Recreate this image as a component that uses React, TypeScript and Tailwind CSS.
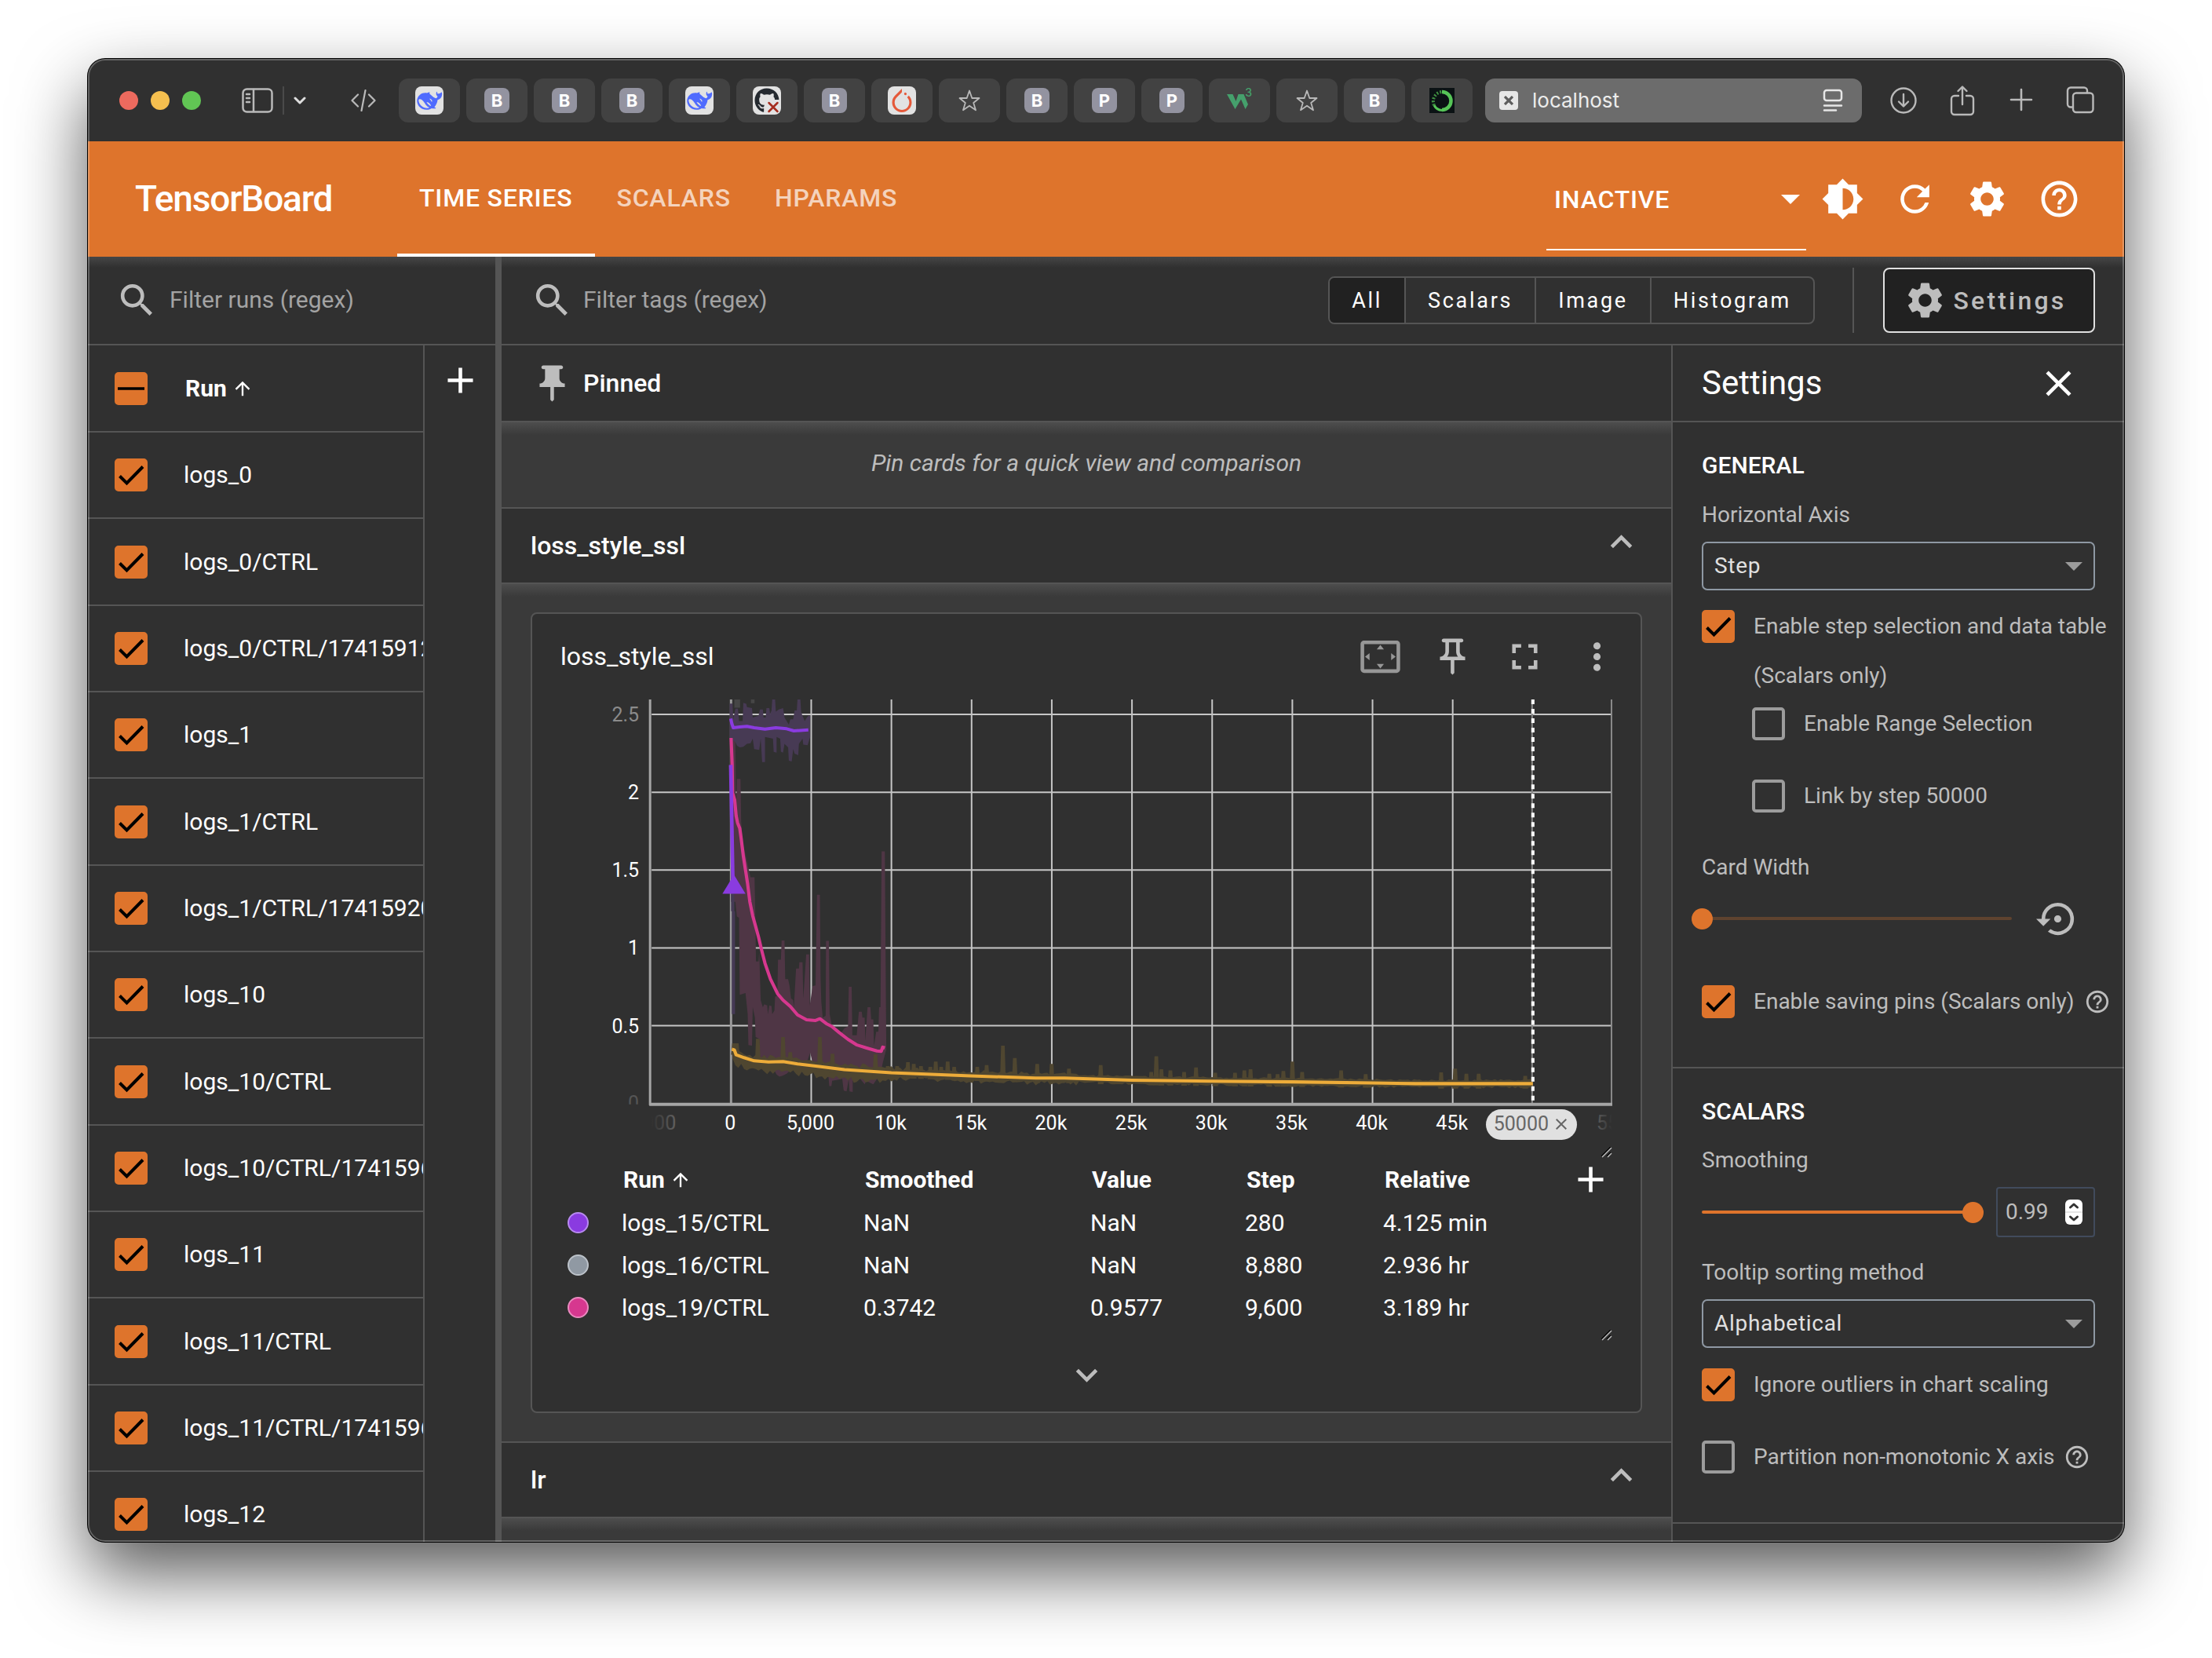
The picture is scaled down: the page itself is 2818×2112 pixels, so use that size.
import React from "react";
import {
  MdAdd,
  MdArrowUpward,
  MdBrightness6,
  MdClose,
  MdExpandLess,
  MdExpandMore,
  MdFullscreen,
  MdHelpOutline,
  MdMoreVert,
  MdOutlinePushPin,
  MdPushPin,
  MdRefresh,
  MdSearch,
  MdSettings,
  MdSettingsBackupRestore,
  MdSettingsOverscan,
} from "react-icons/md";
import { SiPytorch } from "react-icons/si";
import { FaGithub } from "react-icons/fa";

/* ---------- Browser chrome ---------- */

function Whale() {
  return (
    <svg viewBox="0 0 36 36" className="size-9">
      <path
        fill="#4f6bfe"
        d="M33.6 7.6c-.5-.3-1 .8-1.7 1.1-1 .5-2.2.2-3.1 1-.6-.9-1-2-1.1-2.9-.6 0-1.2 1.5-1 3.2.2 1.300.9 2.100 1.800 2.700-.5 1.400-1.300 2.600-2.300 2.500-2.200-.5-3.900-2.200-5.900-3.900-1.200-1-2.100-1.600-2.100-2.300 0-.5.4-1 .2-1.300-.8-.5-2.500.6-3.500.8-3.200-.5-6.300.1-8.900 2.200C3.200 13 2 16 2.300 19.300c.4 4.200 3 7.700 6.900 9.400 3.800 1.700 8.400 1.300 11.700-.8 1.500.6 4.500.6 5.300 0 .5-.5-1-.9-1.900-1.400 2.300-2.500 3.700-5.500 4.200-9.200 2.700-1 5.100-2.700 5.600-6.400.2-1.400 0-3-.5-3.300z"
      />
      <path fill="#e2e2e2" d="M4.300 17.500c.5-1.800 2.300-1.600 4-.5 3.300 2.100 4.200 6.300 7 8.500.8.7 2.300 1.100 2.500 1.500-.4.700-4 1-6.500 0-4.200-1.600-7-5.800-7-9.500zM14.500 20.400c.9-.4 2.300.2 3.500 1.200 1.200 1.100 2 2.600 2 3.200-.7.300-1.700-.2-2.600-1.200-1-1-1.700-1.900-2.900-3.200z" />
      <path fill="#e2e2e2" d="M18 15.800c1.500-.6 3.400 1 3.600 3 .1 1-.5 1-1.100.4-.4-1.100-1.100-2-2.500-3.400z" />
    </svg>
  );
}

function Octocat() {
  return (
    <div className="relative size-8">
      <FaGithub className="size-8 text-[#24292f]" />
      <svg viewBox="0 0 32 32" className="absolute inset-0 size-8">
        <path d="M13 15h20v18H13z" fill="#e2e2e2" />
        <path d="M18.500 19 29.500 30M29.500 19 18.500 30" stroke="#a52c1e" strokeWidth="2.500" strokeLinecap="round" />
      </svg>
    </div>
  );
}

function Star() {
  return (
    <svg viewBox="0 0 30 30" className="size-[30px]">
      <path
        d="M15 2.500 18.300 12h9.200l-7.300 6 2.800 9.300-8-5.600-8 5.600L9.800 18l-7.300-6h9.200z"
        fill="none"
        stroke="#b9b9b9"
        strokeWidth="1.800"
        strokeLinejoin="round"
      />
    </svg>
  );
}

function SchoolsMark() {
  return (
    <div className="relative size-8 text-[#45a06c]">
      <svg viewBox="0 0 32 32" className="size-8">
        <path d="M0 8h7.500l4 9 3-9h7l5.500 13-3.500 6L18 14.500 10.500 27z" fill="currentColor" />
      </svg>
      <span className="absolute -top-1 right-0 text-sm leading-5 font-medium">3</span>
    </div>
  );
}

function Ring() {
  return (
    <svg viewBox="0 0 32 32" className="size-8">
      <path d="M0 0h32v32H0z" fill="#0b1214" />
      <path d="M16 5a11.500 11.500 0 0 1 0 23" fill="none" stroke="#56c557" strokeWidth="4.500" />
      <path d="M16 28.500A12 12 0 0 1 6 22" fill="none" stroke="#56c557" strokeWidth="3" />
      <path d="M6 22A12 12 0 0 1 16 5" fill="none" stroke="#3f8f41" strokeWidth="4" strokeDasharray="2 2" />
    </svg>
  );
}

function LetterIcon({ letter }: { letter: string }) {
  return (
    <span className="flex size-8 items-center justify-center rounded-lg bg-[#9393a0] text-[22px] leading-8 font-bold text-white">
      {letter}
    </span>
  );
}

function LightTile({ children }: { children: React.ReactNode }) {
  return <span className="flex size-9 items-center justify-center rounded-lg bg-[#e2e2e2]">{children}</span>;
}

const TABS: { name: string; icon: React.ReactNode }[] = [
  { name: "DeepSeek", icon: <LightTile><Whale /></LightTile> },
  { name: "B", icon: <LetterIcon letter="B" /> },
  { name: "B", icon: <LetterIcon letter="B" /> },
  { name: "B", icon: <LetterIcon letter="B" /> },
  { name: "DeepSeek", icon: <LightTile><Whale /></LightTile> },
  { name: "GitHub", icon: <LightTile><Octocat /></LightTile> },
  { name: "B", icon: <LetterIcon letter="B" /> },
  { name: "PyTorch", icon: <LightTile><SiPytorch className="size-[30px] text-[#e5593a]" /></LightTile> },
  { name: "Favorites", icon: <Star /> },
  { name: "B", icon: <LetterIcon letter="B" /> },
  { name: "P", icon: <LetterIcon letter="P" /> },
  { name: "P", icon: <LetterIcon letter="P" /> },
  { name: "W3Schools", icon: <SchoolsMark /> },
  { name: "Favorites", icon: <Star /> },
  { name: "B", icon: <LetterIcon letter="B" /> },
  { name: "Ring", icon: <Ring /> },
];

function BrowserBar() {
  return (
    <div className="flex h-[105px] shrink-0 items-center bg-[#303030] pr-[38px] pl-10 font-['Inter',sans-serif]">
      <div className="flex gap-4">
        <button aria-label="Close window" className="size-6 rounded-full bg-[#ed6a5e]" />
        <button aria-label="Minimize window" className="size-6 rounded-full bg-[#f5bf4f]" />
        <button aria-label="Zoom window" className="size-6 rounded-full bg-[#61c554]" />
      </div>
      <button aria-label="Sidebar" className="ml-[52px]">
        <svg viewBox="0 0 40 32" className="h-8 w-10" fill="none" stroke="#b9b9b9" strokeWidth="2.500" strokeLinecap="round">
          <rect x="1.500" y="1.500" width="37" height="29" rx="5" />
          <path d="M15 2v28M6 8h4M6 13h4M6 18h4" />
        </svg>
      </button>
      <div className="ml-3 h-9 w-[2px] bg-[#4a4a4a]" />
      <button aria-label="Tab groups" className="ml-3">
        <svg viewBox="0 0 16 12" className="h-3 w-4" fill="none" stroke="#dedede" strokeWidth="3" strokeLinecap="round" strokeLinejoin="round">
          <path d="m2 3 6 6 6-6" />
        </svg>
      </button>
      <button aria-label="Developer tools" className="ml-[57px]">
        <svg viewBox="0 0 32 30" className="h-[30px] w-8" fill="none" stroke="#b9b9b9" strokeWidth="2.200" strokeLinecap="round" strokeLinejoin="round">
          <path d="M9 7.500 1.500 15 9 22.500M23 7.500l7.500 7.500-7.500 7.500M18.500 2l-5 26" />
        </svg>
      </button>
      <div className="ml-[29px] flex gap-2">
        {TABS.map((t, i) => (
          <button key={i} aria-label={t.name} className="flex h-14 w-[78px] items-center justify-center rounded-xl bg-[#424242]">
            {t.icon}
          </button>
        ))}
      </div>
      <div className="ml-4 flex h-14 min-w-0 flex-1 items-center rounded-xl bg-[#6c6c6c] pr-6 pl-[18px]">
        <span className="flex size-6 shrink-0 items-center justify-center rounded bg-[#e6e6e6]">
          <svg viewBox="0 0 12 12" className="size-3" stroke="#5c5c5c" strokeWidth="3.200">
            <path d="m1 1 10 10M11 1 1 11" />
          </svg>
        </span>
        <input
          aria-label="Address"
          defaultValue="localhost"
          className="ml-[18px] min-w-0 flex-1 bg-transparent text-[26px] leading-8 text-[#ececec] outline-none"
        />
        <svg viewBox="0 0 26 30" className="h-[30px] w-[26px]" fill="none" stroke="#e6e6e6" strokeWidth="2.500" strokeLinecap="round">
          <rect x="2" y="2" width="22" height="13" rx="3" />
          <path d="M2 21.500h22M2 27.500h15" />
        </svg>
      </div>
      <div className="ml-[35px] flex items-center gap-[39px] text-[#b9b9b9]">
        <button aria-label="Downloads">
          <svg viewBox="0 0 36 36" className="size-9" fill="none" stroke="currentColor" strokeWidth="2.400" strokeLinecap="round" strokeLinejoin="round">
            <circle cx="18" cy="18" r="15.500" />
            <path d="M18 10v15M12 19.500l6 6 6-6" />
          </svg>
        </button>
        <button aria-label="Share">
          <svg viewBox="0 0 36 40" className="h-10 w-9" fill="none" stroke="currentColor" strokeWidth="2.400" strokeLinecap="round" strokeLinejoin="round">
            <path d="M13 14H8a4 4 0 0 0-4 4v16a4 4 0 0 0 4 4h20a4 4 0 0 0 4-4V18a4 4 0 0 0-4-4h-5M18 25V3M12.500 8 18 2.500 23.500 8" />
          </svg>
        </button>
        <button aria-label="New tab">
          <svg viewBox="0 0 36 36" className="size-9" fill="none" stroke="currentColor" strokeWidth="2.600" strokeLinecap="round">
            <path d="M18 4v26M5 17h26" />
          </svg>
        </button>
        <button aria-label="Tab overview">
          <svg viewBox="0 0 36 36" className="size-9" fill="none" stroke="currentColor" strokeWidth="2.400" strokeLinecap="round" strokeLinejoin="round">
            <rect x="9" y="8.500" width="25.500" height="24.500" rx="4" />
            <path d="M8.500 26.500H6a4 4 0 0 1-4-4V5.500a4 4 0 0 1 4-4h17a4 4 0 0 1 4 4v2.500" />
          </svg>
        </button>
      </div>
    </div>
  );
}

/* ---------- TensorBoard header ---------- */

function AppHeader() {
  const tab = "flex h-full items-center border-b-4 px-7 text-[32px] leading-10 font-medium tracking-wide";
  return (
    <header className="flex h-[147px] shrink-0 items-center bg-[#de742c] pr-[37px] pl-[60px] text-white">
      <h1 className="mb-[2px] w-[334px] text-[46px] leading-[56px] font-medium tracking-tight">TensorBoard</h1>
      <nav className="flex h-full">
        <a href="#timeseries" className={tab + " border-white"}>TIME SERIES</a>
        <a href="#scalars" className={tab + " border-transparent text-white/70"}>SCALARS</a>
        <a href="#hparams" className={tab + " border-transparent text-white/70"}>HPARAMS</a>
      </nav>
      <div className="ml-auto flex h-full items-center">
        <div className="mb-2 grid h-[129px] w-[331px] items-center self-end border-b-2 border-white">
          <select aria-label="Plugin" className="col-start-1 row-start-1 h-full appearance-none bg-transparent px-[10px] text-[32px] leading-10 font-medium tracking-wide outline-none">
            <option>INACTIVE</option>
          </select>
          <svg viewBox="0 0 24 12" className="pointer-events-none col-start-1 row-start-1 mr-2 h-3 w-6 justify-self-end">
            <path d="M0 0h24L12 12z" fill="#fff" />
          </svg>
        </div>
        {[
          { name: "Theme", Icon: MdBrightness6 },
          { name: "Reload", Icon: MdRefresh },
          { name: "Settings", Icon: MdSettings },
          { name: "Help", Icon: MdHelpOutline },
        ].map(({ name, Icon }) => (
          <button key={name} aria-label={name} className="flex size-[92px] items-center justify-center">
            <Icon className="size-[55px]" />
          </button>
        ))}
      </div>
    </header>
  );
}

/* ---------- Shared controls ---------- */

function Checkbox({ id, checked, mixed, label }: { id?: string; checked?: boolean; mixed?: boolean; label?: string }) {
  return (
    <span className="grid size-[42px] shrink-0">
      <input
        id={id}
        type="checkbox"
        aria-label={label}
        defaultChecked={checked || mixed}
        className="peer col-start-1 row-start-1 size-[42px] appearance-none rounded-[5px] border-4 border-[#9c9c9c] checked:border-[#de742c] checked:bg-[#de742c]"
      />
      <svg viewBox="0 0 42 42" className="pointer-events-none invisible col-start-1 row-start-1 size-[42px] peer-checked:visible" fill="none" stroke="#000">
        {mixed ? <path d="M4 21h34" strokeWidth="3.500" /> : <path d="m6.500 22.500 9 9L36 10.500" strokeWidth="4" />}
      </svg>
    </span>
  );
}

function SearchBox({ label, className }: { label: string; className: string }) {
  return (
    <label className={"flex items-center text-[#bdbdbd] " + className}>
      <MdSearch className="size-[55px] shrink-0" />
      <input
        type="text"
        aria-label={label}
        placeholder={label}
        className="mb-[2px] min-w-0 flex-1 bg-transparent text-[30px] leading-10 outline-none placeholder:text-[#a3a3a3]"
      />
    </label>
  );
}

/* ---------- Runs panel ---------- */

const RUNS = [
  "logs_0",
  "logs_0/CTRL",
  "logs_0/CTRL/1741591234.5",
  "logs_1",
  "logs_1/CTRL",
  "logs_1/CTRL/1741592033.8",
  "logs_10",
  "logs_10/CTRL",
  "logs_10/CTRL/1741596120.4",
  "logs_11",
  "logs_11/CTRL",
  "logs_11/CTRL/1741596877.1",
  "logs_12",
  "logs_12/CTRL",
];

function RunsPanel() {
  return (
    <aside className="flex w-[519px] shrink-0 flex-col">
      <div className="flex h-[113px] shrink-0 border-b-2 border-[#555] bg-linear-to-b from-[#464646] to-[#303030] to-[14px]">
        <SearchBox label="Filter runs (regex)" className="flex-1 gap-[14px] pl-[35px]" />
      </div>
      <div className="flex min-h-0 flex-1 overflow-hidden">
        <div className="min-w-0 flex-1 overflow-hidden border-r-2 border-[#555]">
          <table className="h-[1656px] w-full table-fixed border-collapse text-left text-[30px] leading-10 text-white">
            <thead>
              <tr className="h-[110px] border-b-2 border-[#555]">
                <th className="w-[122px] pl-[34px]"><Checkbox mixed label="Select all runs" /></th>
                <th className="pl-[2px] font-bold">
                  <button className="flex items-center gap-[6px]">Run <MdArrowUpward className="size-7" /></button>
                </th>
              </tr>
            </thead>
            <tbody>
              {RUNS.map((run) => (
                <tr key={run} className="border-b-2 border-[#555]">
                  <td className="pl-[34px]"><Checkbox checked label={run} /></td>
                  <td className="overflow-hidden whitespace-nowrap">{run}</td>
                </tr>
              ))}
            </tbody>
          </table>
        </div>
        <div className="flex w-[90px] shrink-0 items-start justify-center pt-[17px]">
          <button aria-label="Add column"><MdAdd className="size-[55px] text-white" /></button>
        </div>
      </div>
    </aside>
  );
}

/* ---------- Chart ---------- */

type Point = [number, number];

const toPath = (pts: Point[]) => pts.map((p) => p.join(",")).join(" ");

const PINK_LINE: Point[] = [
  [636, 403], [639, 480], [640, 560], [646, 580], [650, 625], [654, 645], [660, 660], [664, 690], [670, 740], [676, 780],
  [682, 820], [688, 870], [696, 910], [704, 940], [712, 970], [720, 1005], [730, 1045], [745, 1090], [765, 1132],
  [780, 1150], [800, 1168], [820, 1192], [845, 1206], [870, 1208], [882, 1203], [900, 1217], [915, 1225], [935, 1242],
  [960, 1262], [985, 1278], [1010, 1286], [1040, 1295], [1052, 1296], [1056, 1284], [1062, 1286],
];

const PINK_RANGE: Point[] = [
  [632, 340], [642, 340], [648, 415], [650, 640], [652, 520], [662, 520], [664, 640], [668, 700], [690, 800], [701, 800],
  [703, 900], [705, 1040], [712, 1040], [714, 1010], [718, 1150], [724, 1170], [728, 1162], [736, 1165], [738, 1190],
  [742, 1165], [748, 1167], [750, 1190], [756, 1180], [758, 1140], [764, 1138], [766, 1035], [774, 1035], [776, 980],
  [784, 980], [786, 1090], [794, 1090], [798, 1110], [802, 1145], [808, 1150], [810, 1170], [816, 1060], [824, 1060],
  [825, 1042], [834, 1042], [836, 1145], [840, 1085], [844, 1020], [852, 1020], [854, 1165], [862, 1110], [870, 1108],
  [874, 850], [882, 850], [884, 1090], [886, 1155], [890, 1200], [898, 1195], [899, 981], [907, 981], [909, 1190],
  [916, 1225], [940, 1245], [950, 1230], [960, 1225], [962, 1112], [970, 1112], [972, 1250], [984, 1250], [990, 1183],
  [998, 1183], [1000, 1200], [1006, 1200], [1008, 1265], [1014, 1170], [1022, 1170], [1024, 1205], [1030, 1205],
  [1032, 1280], [1038, 1240], [1044, 1240], [1046, 1170], [1050, 1170], [1053, 726], [1062, 726], [1064, 1020],
  [1066, 1290], [1056, 1330], [1050, 1360], [1030, 1390], [1010, 1380], [1006, 1390], [990, 1370], [973, 1370],
  [973, 1412], [964, 1410], [962, 1375], [956, 1410], [948, 1408], [944, 1375], [916, 1380], [914, 1395], [908, 1395],
  [906, 1370], [870, 1360], [855, 1300], [845, 1330], [820, 1340], [800, 1350], [790, 1360], [780, 1365], [770, 1368],
  [762, 1362], [740, 1320], [722, 1320], [716, 1315], [714, 1260], [704, 1255], [702, 1200], [696, 1170], [694, 1280],
  [684, 1278], [682, 1190], [676, 1130], [660, 1135], [658, 915], [652, 912], [648, 870], [636, 870],
];

const PURPLE_RANGE: Point[] = [
  [632, 305], [640, 305], [642, 350], [648, 320], [655, 320], [658, 355], [668, 355], [670, 303], [678, 306], [680, 315],
  [694, 318], [696, 345], [712, 340], [716, 322], [724, 322], [726, 345], [732, 345], [734, 318], [742, 318], [744, 335],
  [748, 325], [750, 293], [758, 293], [760, 328], [768, 322], [780, 318], [784, 345], [796, 365], [800, 350], [808, 350],
  [812, 325], [818, 325], [820, 293], [828, 293], [830, 330], [840, 355], [846, 345], [850, 340], [855, 340], [855, 400],
  [848, 424], [836, 422], [834, 405], [824, 420], [822, 452], [812, 448], [808, 435], [804, 470], [796, 468], [794, 430],
  [784, 420], [780, 445], [774, 442], [772, 405], [762, 400], [762, 445], [754, 443], [752, 405], [730, 400], [730, 472],
  [722, 472], [718, 405], [714, 437], [700, 435], [696, 405], [690, 418], [680, 420], [670, 428], [660, 430], [652, 425],
  [648, 415], [640, 410], [632, 410],
];

const PURPLE_LINE: Point[] = [
  [635, 348], [638, 362], [642, 374], [660, 372], [680, 370], [700, 374], [730, 378], [760, 374], [790, 377], [810, 383],
  [850, 380],
];

const AMBER_LINE: Point[] = [
  [638, 1290], [645, 1292], [650, 1306], [672, 1314], [700, 1323], [740, 1326], [780, 1325], [820, 1332], [880, 1339],
  [950, 1348], [1080, 1357], [1300, 1366], [1480, 1372], [1560, 1372], [1747, 1378], [1969, 1381], [2191, 1383],
  [2413, 1386], [2532, 1388], [2857, 1388],
];

const AMBER_SPIKES: Point[] = [
  [644, 1273], [652, 1273], [710, 1260], [780, 1255], [800, 1298], [882, 1255], [917, 1303], [1036, 1304], [1070, 1338],
  [1096, 1338], [1126, 1327], [1142, 1332], [1162, 1338], [1188, 1340], [1203, 1325], [1218, 1340], [1236, 1325],
  [1254, 1340], [1318, 1340], [1344, 1335], [1389, 1280], [1422, 1315], [1484, 1332], [1524, 1332], [1572, 1345],
  [1660, 1335], [1800, 1355], [1814, 1310], [1828, 1347], [1853, 1350], [1891, 1355], [1924, 1342], [1977, 1357],
  [2032, 1357], [2058, 1350], [2075, 1347], [2127, 1360], [2150, 1361], [2166, 1352], [2191, 1325], [2218, 1355],
  [2326, 1350], [2394, 1361], [2603, 1356], [2642, 1345], [2673, 1360], [2707, 1360], [2836, 1366],
];

function lineAt(x: number) {
  for (let i = 1; i < AMBER_LINE.length; i++) {
    const [x0, y0] = AMBER_LINE[i - 1];
    const [x1, y1] = AMBER_LINE[i];
    if (x <= x1) return y0 + ((y1 - y0) * (x - x0)) / (x1 - x0);
  }
  return 1388;
}

const wobble = (x: number) => Math.abs(Math.sin(x * 12.9898) * 43758.5453) % 1;

function amberRange(): Point[] {
  const top: Point[] = [];
  const bottom: Point[] = [];
  for (let x = 640; x <= 2856; x += 8) {
    const mid = lineAt(x);
    const calm = x < 1100 ? 1 : x < 1600 ? 0.7 : 0.35;
    top.push([x, mid - 8 - wobble(x) * 14 * calm]);
    bottom.push([x, mid + 6 + (x < 1100 ? 12 : 4) * calm + wobble(x + 3) * 18 * calm]);
  }
  return [...top, ...bottom.reverse()];
}

const Y_TICKS = [
  { y: 910, label: "2.5", dim: true },
  { y: 1009, label: "2" },
  { y: 1108, label: "1.5" },
  { y: 1207, label: "1" },
  { y: 1306, label: "0.5" },
];

const X_TICKS = ["0", "5,000", "10k", "15k", "20k", "25k", "30k", "35k", "40k", "45k"];

function Chart() {
  return (
    <svg viewBox="715 891 1338 568" className="block h-auto w-full" role="img" aria-label="loss_style_ssl chart">
      <defs>
        <linearGradient id="fadeLeft" gradientUnits="userSpaceOnUse" x1="830" y1="0" x2="890" y2="0">
          <stop offset="0" stopColor="#fff" stopOpacity="0" />
          <stop offset="1" stopColor="#fff" stopOpacity=".45" />
        </linearGradient>
        <linearGradient id="fadeRight" gradientUnits="userSpaceOnUse" x1="2025" y1="0" x2="2053" y2="0">
          <stop offset="0" stopColor="#fff" stopOpacity=".3" />
          <stop offset="1" stopColor="#fff" stopOpacity="0" />
        </linearGradient>
        <clipPath id="leftClip"><path d="M831 1410h200v50H831z" /></clipPath>
        <clipPath id="zeroClip"><path d="M760 1380h68v26h-68z" /></clipPath>
      </defs>

      {Y_TICKS.map((t) => (
        <path key={t.label} d={`M831 ${t.y}H2053`} stroke="#c6c6c6" strokeWidth="2" />
      ))}
      {X_TICKS.map((t, i) => (
        <path key={t} d={`M${932 + i * 102} 891V1405`} stroke={i ? "#c6c6c6" : "#9a9a9a"} strokeWidth={i ? 2 : 3} />
      ))}
      <path d="M2052 891V1405" stroke="#8a8a8a" strokeWidth="2" />
      <path d="M1951 891V1405" stroke="#8a8a8a" strokeWidth="2" />

      {/* Series are plotted in a finer grid than the axes. */}
      <svg x="640" y="760" width="720" height="700" viewBox="0 0 1568 1568" preserveAspectRatio="none" overflow="visible">
        <polygon points={toPath(PINK_RANGE)} fill="#4f3645" />
        <polygon points={toPath(PURPLE_RANGE)} fill="#473a54" />
        <path d="M645 293h16v24h-16zM691 293h10v11h-10z" fill="#464646" />
        <path d="M636 847h9v50h2v293h-9V897h-2z" fill="#453a55" />
        <polygon points={toPath(amberRange())} fill="#4f4630" />
        {AMBER_SPIKES.map(([x, y]) => (
          <path key={x} d={`M${x - 8} ${lineAt(x) + 14}L${x - 5} ${y}h10L${x + 8} ${lineAt(x) + 14}z`} fill="#4f4630" />
        ))}
        <g fill="none" strokeWidth="9" strokeLinejoin="round">
          <polyline points={toPath(AMBER_LINE)} stroke="#edac3a" />
          <polyline points={toPath(PINK_LINE)} stroke="#d6388f" />
          <polyline points={toPath(PURPLE_LINE)} stroke="#8a3be0" />
          <path d="M635 480 641 810" stroke="#8a3be0" strokeWidth="10" />
        </g>
        <path d="M644 793 676 847H612z" fill="#8a3be0" />
      </svg>

      <path d="M829 891V1407" stroke="#a5a5a5" strokeWidth="3" />
      <path d="M828 1406H2053" stroke="#a5a5a5" strokeWidth="4" />
      <path d="M1952 891V1406" stroke="#fff" strokeWidth="4" strokeDasharray="6 6" />

      <g fontSize="25" fontFamily="Roboto, sans-serif" fill="#fff">
        {Y_TICKS.map((t) => (
          <text key={t.label} x="815" y={t.y + 9} textAnchor="end" fill={t.dim ? "#8b8b8b" : "#fff"}>{t.label}</text>
        ))}
        <text x="815" y="1413" textAnchor="end" fill="#555" clipPath="url(#zeroClip)">0</text>
        {X_TICKS.map((t, i) => (
          <text key={t} x={931 + i * 102} y="1438" textAnchor="middle">{t}</text>
        ))}
        <text x="862" y="1438" textAnchor="end" fill="url(#fadeLeft)" clipPath="url(#leftClip)">-5,000</text>
        <text x="2033" y="1438" fill="url(#fadeRight)">55k</text>
      </g>
    </svg>
  );
}

function ResizeHandle() {
  return (
    <div className="flex h-[15px] items-end justify-end">
      <svg viewBox="0 0 14 14" className="size-[14px]" fill="none" strokeWidth="1.500">
        <path d="M0 12 12 0M7 12l5-5" stroke="#000" />
        <path d="M1 13 13 1M8 13l5-5" stroke="#bbb" />
      </svg>
    </div>
  );
}

const ROWS = [
  { run: "logs_15/CTRL", smoothed: "NaN", value: "NaN", step: "280", relative: "4.125 min", dot: "bg-[#8a3be0] border-[#b88af0]" },
  { run: "logs_16/CTRL", smoothed: "NaN", value: "NaN", step: "8,880", relative: "2.936 hr", dot: "bg-[#9099a3] border-[#bcc2c9]" },
  { run: "logs_19/CTRL", smoothed: "0.3742", value: "0.9577", step: "9,600", relative: "3.189 hr", dot: "bg-[#d6388f] border-[#e98abf]" },
];

function DataTable() {
  return (
    <table className="w-full table-fixed text-left text-[30px] leading-10 text-white">
      <thead>
        <tr className="h-14">
          <th className="w-[78px]"><span className="sr-only">Color</span></th>
          <th className="w-[308px] pl-[2px]"><button className="flex items-center gap-[6px] font-bold">Run <MdArrowUpward className="size-7" /></button></th>
          <th className="w-[289px] pl-[2px]">Smoothed</th>
          <th className="w-[197px] pl-[2px]">Value</th>
          <th className="w-[176px] pl-[2px]">Step</th>
          <th className="pl-[2px]">Relative</th>
          <th className="w-[55px]">
            <button aria-label="Add column" className="block"><MdAdd className="size-[55px]" /></button>
          </th>
        </tr>
      </thead>
      <tbody>
        {ROWS.map((r) => (
          <tr key={r.run} className="h-[54px]">
            <td className="pl-[9px]"><span className={"block size-[27px] rounded-full border-2 " + r.dot} /></td>
            <td>{r.run}</td>
            <td>{r.smoothed}</td>
            <td>{r.value}</td>
            <td>{r.step}</td>
            <td colSpan={2}>{r.relative}</td>
          </tr>
        ))}
      </tbody>
    </table>
  );
}

function Card() {
  return (
    <article className="mx-[37px] my-9 rounded-lg border-2 border-[#555] bg-[#303030]">
      <div className="flex h-[109px] items-center justify-between pr-[10px] pl-9 text-[#bdbdbd]">
        <h3 className="mb-[2px] text-[32px] leading-10 text-white">loss_style_ssl</h3>
        <div className="flex">
          <button aria-label="Fit domain to data" className="flex size-[92px] items-center justify-center text-[#979797]">
            <MdSettingsOverscan className="size-[55px]" />
          </button>
          <button aria-label="Pin card" className="flex size-[92px] items-center justify-center"><MdOutlinePushPin className="size-[55px]" /></button>
          <button aria-label="Toggle full size" className="flex size-[92px] items-center justify-center"><MdFullscreen className="size-[55px]" /></button>
          <button aria-label="More options" className="flex size-[92px] items-center justify-center"><MdMoreVert className="size-[55px]" /></button>
        </div>
      </div>
      <div className="px-9">
        <div className="relative">
          <Chart />
          <button className="absolute right-[45px] bottom-2 flex h-[39px] items-center gap-1 rounded-full bg-[#e0e0e0] pr-2 pl-[10px] text-[25px] leading-8 text-[#666]">
            50000
            <MdClose className="size-6" />
          </button>
        </div>
        <ResizeHandle />
        <DataTable />
        <ResizeHandle />
      </div>
      <div className="mt-4 mb-[18px] flex justify-center">
        <button aria-label="Expand table" className="h-14"><MdExpandMore className="size-[55px] text-[#bdbdbd]" /></button>
      </div>
    </article>
  );
}

/* ---------- Main column ---------- */

function GroupHeader({ title }: { title: string }) {
  return (
    <div className="flex h-[98px] items-center justify-between border-y-2 border-[#555] bg-[#303030] pr-9 pl-[37px]">
      <h2 className="text-[32px] leading-10 font-medium text-white">{title}</h2>
      <button aria-label={"Collapse " + title} className="mb-[10px]"><MdExpandLess className="size-[55px] text-[#bdbdbd]" /></button>
    </div>
  );
}

function CardsColumn() {
  const shade = "bg-linear-to-b from-[#4d4d4d] to-[#3a3a3a] to-[16px]";
  return (
    <main className="min-w-0 flex-1 overflow-hidden bg-[#3a3a3a]">
      <div className="flex h-[98px] items-center gap-3 border-b-2 border-[#555] bg-[#303030] pl-[37px]">
        <MdPushPin className="size-[55px] text-[#bdbdbd]" />
        <h2 className="text-[32px] leading-10 font-medium text-white">Pinned</h2>
      </div>
      <p className={"flex h-[108px] items-center justify-center pb-1 text-[30px] leading-10 text-[#bdbdbd] italic " + shade}>
        Pin cards for a quick view and comparison
      </p>
      <GroupHeader title="loss_style_ssl" />
      <div className={"flow-root " + shade}><Card /></div>
      <GroupHeader title="lr" />
      <div className={"h-10 " + shade} />
    </main>
  );
}

/* ---------- Settings sidebar ---------- */

function SelectBox({ id, value }: { id: string; value: string }) {
  return (
    <div className="mt-4 grid items-center">
      <select
        id={id}
        className="col-start-1 row-start-1 h-[62px] w-full appearance-none rounded-[7px] border-2 border-[#8e98a3] bg-transparent px-[14px] text-[28px] leading-10 tracking-wide text-[#e0e0e0] outline-none"
      >
        <option>{value}</option>
      </select>
      <svg viewBox="0 0 22 11" className="pointer-events-none col-start-1 row-start-1 mr-4 h-[11px] w-[22px] justify-self-end">
        <path d="M0 0h22L11 11z" fill="#9c9c9c" />
      </svg>
    </div>
  );
}

function CheckRow({ id, label, checked, help, className }: { id: string; label: string; checked?: boolean; help?: boolean; className: string }) {
  return (
    <div className={"flex h-[60px] items-center " + className}>
      <Checkbox id={id} checked={checked} />
      <label htmlFor={id} className="ml-6 whitespace-nowrap">{label}</label>
      {help && (
        <button aria-label={"Help: " + label} className="ml-3"><MdHelpOutline className="size-[34px]" /></button>
      )}
    </div>
  );
}

const THUMB =
  "[&::-webkit-slider-thumb]:size-[27px] [&::-webkit-slider-thumb]:appearance-none [&::-webkit-slider-thumb]:rounded-full [&::-webkit-slider-thumb]:bg-[#de742c]";

function SettingsPanel() {
  return (
    <aside className="w-[577px] shrink-0 overflow-hidden border-l-2 border-[#555] bg-[#303030] text-[28px] leading-9 text-[#bdbdbd]">
      <div className="flex h-[98px] items-center justify-between border-b-2 border-[#555] pr-14 pl-[37px] text-white">
        <h2 className="text-[42px] leading-[52px]">Settings</h2>
        <button aria-label="Close settings"><MdClose className="size-[55px]" /></button>
      </div>

      <section className="border-b-2 border-[#555] px-[37px] pt-[37px] pb-[53px]">
        <h3 className="text-[30px] font-medium text-white">GENERAL</h3>
        <label htmlFor="axis" className="mt-[27px] block">Horizontal Axis</label>
        <SelectBox id="axis" value="Step" />
        <div className="mt-[14px] -mr-6 flex gap-6 leading-[63px]">
          <div className="mt-[11px]"><Checkbox id="step" checked /></div>
          <label htmlFor="step">Enable step selection and data table (Scalars only)</label>
        </div>
        <CheckRow id="range" label="Enable Range Selection" className="ml-16" />
        <CheckRow id="link" label="Link by step 50000" className="mt-8 ml-16" />
        <label htmlFor="width" className="mt-[43px] block">Card Width</label>
        <div className="mt-[19px] flex h-14 items-center">
          <div className="grid flex-1 items-center">
            <div className="col-start-1 row-start-1 h-1 rounded-full bg-[#5f432f]" />
            <input id="width" type="range" defaultValue={0} className={"col-start-1 row-start-1 -ml-[13px] h-[27px] appearance-none bg-transparent " + THUMB} />
          </div>
          <button aria-label="Reset card width" className="mr-5 ml-[31px]"><MdSettingsBackupRestore className="size-[55px]" /></button>
        </div>
        <CheckRow id="pins" label="Enable saving pins (Scalars only)" checked help className="mt-12 -mr-4" />
      </section>

      <section className="border-b-2 border-[#555] px-[37px] pt-[37px] pb-[53px]">
        <h3 className="text-[30px] font-medium text-white">SCALARS</h3>
        <label htmlFor="smoothing" className="mt-[26px] block">Smoothing</label>
        <div className="mt-4 flex h-16 items-center">
          <div className="grid flex-1 items-center">
            <div className="col-start-1 row-start-1 h-1 rounded-full bg-[#de742c]" />
            <input
              id="smoothing"
              type="range"
              min={0}
              max={0.99}
              step={0.01}
              defaultValue={0.99}
              className={"col-start-1 row-start-1 -ml-[13px] h-[27px] appearance-none bg-transparent " + THUMB}
            />
          </div>
          <div className="ml-4 flex h-16 w-[126px] items-center rounded border-2 border-[#414b5c] pr-[14px] pl-[10px]">
            <input
              type="number"
              aria-label="Smoothing value"
              defaultValue={0.99}
              className="min-w-0 flex-1 appearance-none bg-transparent outline-none [&::-webkit-inner-spin-button]:appearance-none"
            />
            <button aria-label="Step value" className="rounded-md bg-white">
              <svg viewBox="0 0 22 32" className="h-8 w-[22px]" fill="none" stroke="#333" strokeWidth="3" strokeLinecap="round" strokeLinejoin="round">
                <path d="M0 16h22" stroke="#ccc" strokeWidth="1" />
                <path d="m6.500 10 4.500-4 4.500 4M6.500 22l4.500 4 4.500-4" />
              </svg>
            </button>
          </div>
        </div>
        <label htmlFor="sorting" className="mt-[27px] block">Tooltip sorting method</label>
        <SelectBox id="sorting" value="Alphabetical" />
        <CheckRow id="outliers" label="Ignore outliers in chart scaling" checked className="mt-[17px]" />
        <CheckRow id="partition" label="Partition non-monotonic X axis" help className="mt-8" />
      </section>
    </aside>
  );
}

/* ---------- Page ---------- */

function FilterBar() {
  return (
    <div className="flex h-[113px] shrink-0 items-center border-b-2 border-[#555] bg-linear-to-b from-[#464646] to-[#303030] to-[14px] pr-[37px]">
      <SearchBox label="Filter tags (regex)" className="flex-1 gap-3 pl-[37px]" />
      <div className="flex h-[61px] divide-x-2 divide-[#555] overflow-hidden rounded-lg border-2 border-[#555] text-[27px] leading-9 tracking-widest text-white">
        <button className="bg-[#212121] px-7">All</button>
        <button className="px-7">Scalars</button>
        <button className="px-7">Image</button>
        <button className="px-7">Histogram</button>
      </div>
      <div className="ml-12 h-[83px] w-[2px] bg-[#555]" />
      <button className="ml-[37px] flex h-[83px] w-[270px] items-center justify-center gap-2 rounded-lg border-2 border-[#e0e0e0] bg-[#212121] pr-[10px] text-[32px] leading-10 font-medium tracking-widest text-[#bdbdbd]">
        <MdSettings className="size-[55px]" />
        Settings
      </button>
    </div>
  );
}

export default function App() {
  return (
    <div className="h-screen bg-white px-28 pt-[75px] pb-[148px] font-['Roboto',sans-serif]">
      <div className="relative flex h-full flex-col overflow-hidden rounded-[22px] bg-[#303030] shadow-[0_0_0_1px_#000,0_40px_90px_rgba(0,0,0,0.66)]">
        <BrowserBar />
        <AppHeader />
        <div className="flex min-h-0 flex-1">
          <RunsPanel />
          <div className="w-2 shrink-0 bg-[#555]" />
          <div className="flex min-w-0 flex-1 flex-col">
            <FilterBar />
            <div className="flex min-h-0 flex-1">
              <CardsColumn />
              <SettingsPanel />
            </div>
          </div>
        </div>
        <div className="pointer-events-none absolute inset-0 rounded-[22px] border-2 border-white/25" />
      </div>
    </div>
  );
}
